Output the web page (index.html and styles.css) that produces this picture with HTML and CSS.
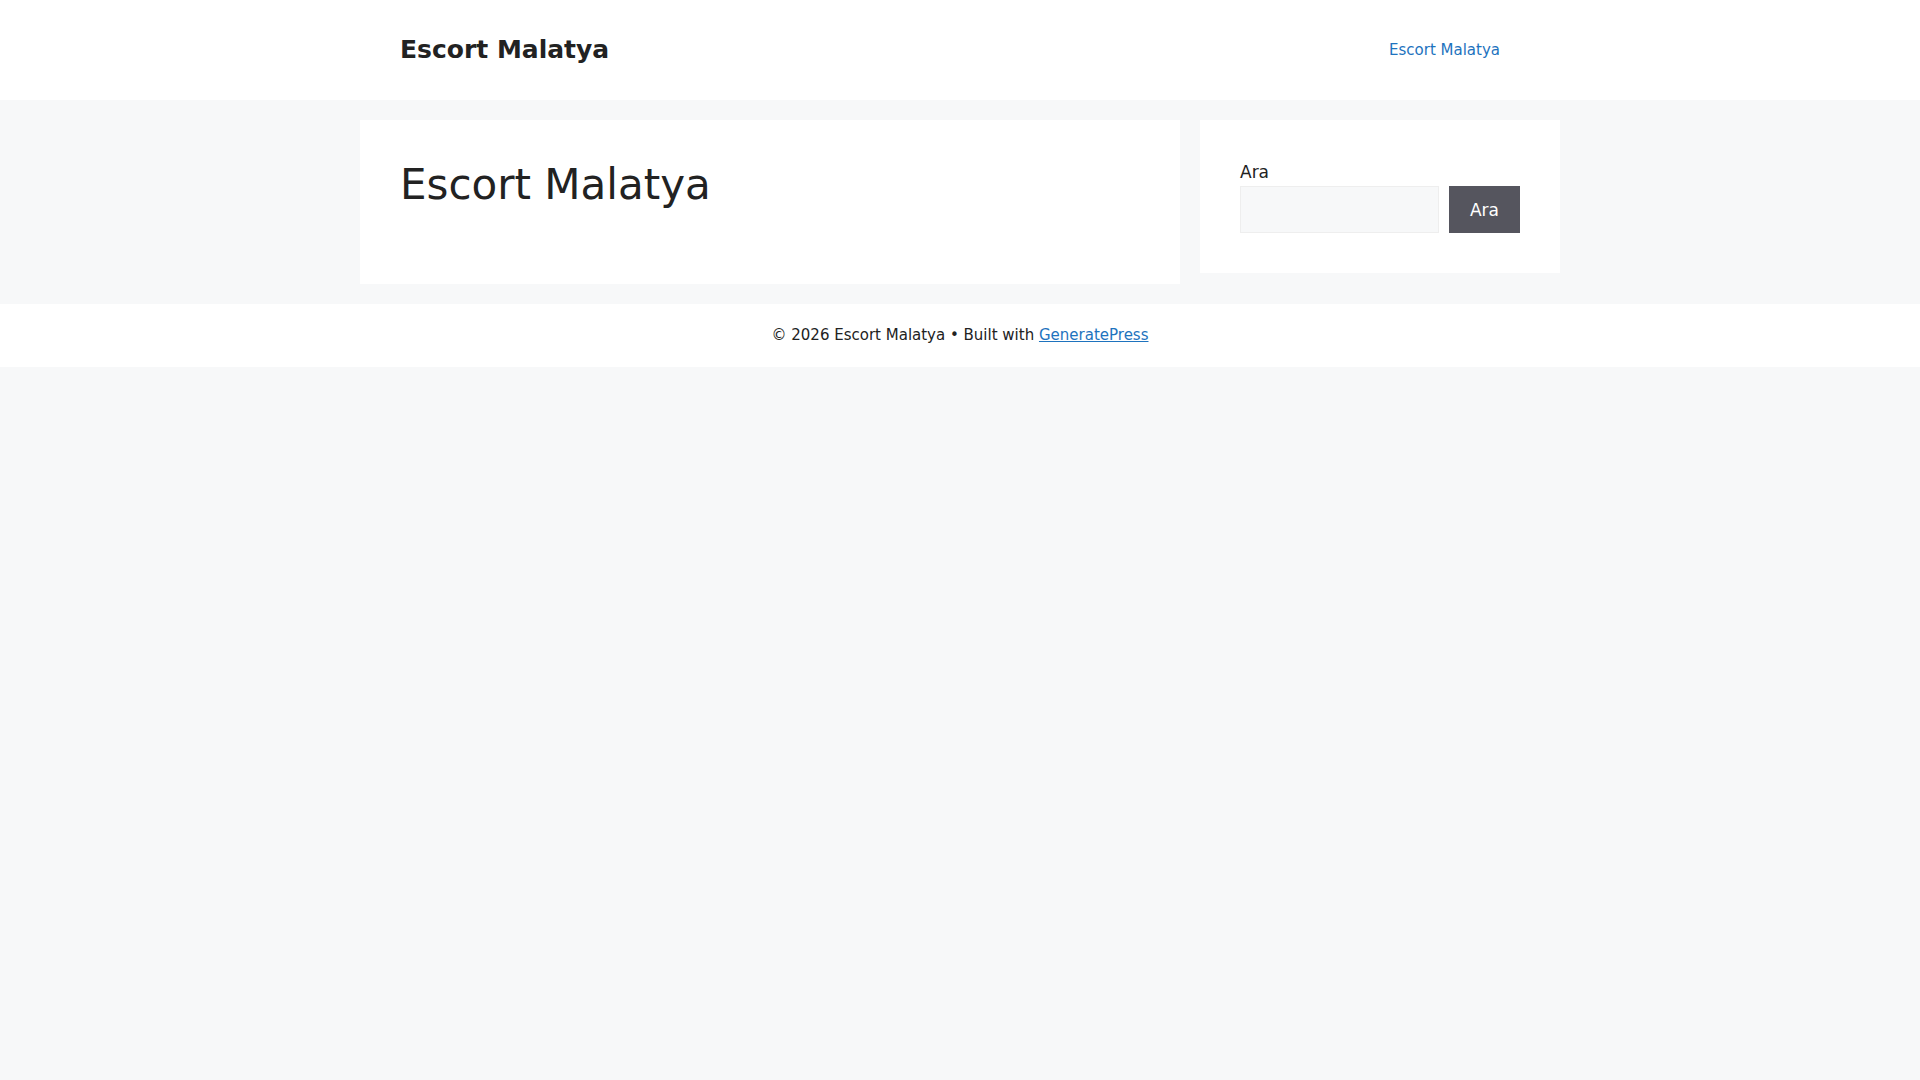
FILE: index.html
```html
<!DOCTYPE html>
<html lang="tr">
<head>
<meta charset="utf-8">
<title>Escort Malatya</title>
<link rel="stylesheet" href="styles.css">
</head>
<body>
<header class="site-header">
  <div class="inside-header">
    <p class="main-title">Escort Malatya</p>
    <nav class="main-nav">
      <a class="nav-link" href="#">Escort Malatya</a>
    </nav>
  </div>
</header>
<div class="site-content">
  <main class="content-area">
    <article class="inside-article">
      <h1 class="entry-title">Escort Malatya</h1>
      <div class="entry-content"></div>
    </article>
  </main>
  <aside class="sidebar">
    <div class="widget">
      <form class="search-form">
        <label class="search-label" for="s">Ara</label>
        <div class="search-row">
          <input class="search-input" id="s" type="search">
          <button class="search-button" type="button">Ara</button>
        </div>
      </form>
    </div>
  </aside>
</div>
<footer class="site-info">
  <div class="copyright">© 2026 Escort Malatya • Built with <a class="footer-link" href="#">GeneratePress</a></div>
</footer>
</body>
</html>
```
FILE: styles.css
```css
* { box-sizing: border-box; }
html, body { margin: 0; padding: 0; }
body {
  background: #f7f8f9;
  color: #222222;
  font-family: "DejaVu Sans", sans-serif;
  font-size: 17px;
  line-height: 1.5;
}
a { color: #1e73be; }

.site-header { background: #ffffff; }
.inside-header {
  width: 1200px;
  margin: 0 auto;
  padding: 20px 40px;
  display: flex;
  align-items: center;
  justify-content: space-between;
}
.main-title {
  margin: 0;
  font-size: 25px;
  font-weight: 700;
  line-height: 1.2;
}
.main-nav { display: flex; }
.nav-link {
  display: block;
  padding: 0 20px;
  line-height: 60px;
  font-size: 15px;
  text-decoration: none;
  color: #1e73be;
}

.site-content {
  width: 1200px;
  margin: 0 auto;
  display: flex;
  align-items: flex-start;
}
.content-area {
  width: 840px;
  padding: 20px 20px 20px 0;
}
.inside-article {
  background: #ffffff;
  padding: 40px;
  height: 163.5px;
}
.entry-title {
  margin: 0;
  font-size: 42px;
  font-weight: 400;
  line-height: 1.2;
}
.sidebar {
  width: 360px;
  padding-top: 20px;
}
.widget {
  background: #ffffff;
  padding: 40px;
}
.search-form { margin: 0; }
.search-label {
  display: block;
  font-size: 17px;
  line-height: 25.5px;
  height: 26px;
}
.search-row {
  display: flex;
  gap: 10px;
}
.search-input {
  width: 199px;
  height: 47px;
  margin: 0;
  background: #f7f8f9;
  border: 1px solid #eeeeee;
  border-radius: 0;
  padding: 10px 15px;
  font-family: inherit;
  font-size: 17px;
  color: #666666;
}
.search-button {
  width: 71px;
  height: 47px;
  margin: 0;
  border: 0;
  border-radius: 0;
  background: #55555e;
  color: #ffffff;
  font-family: inherit;
  font-size: 17px;
  padding: 10px 20px;
}

.site-info {
  background: #ffffff;
  padding: 20px 40px;
  text-align: center;
  font-size: 15px;
  line-height: 1.5;
  height: 63px;
}
.footer-link { color: #1e73be; text-decoration: underline; }
```
